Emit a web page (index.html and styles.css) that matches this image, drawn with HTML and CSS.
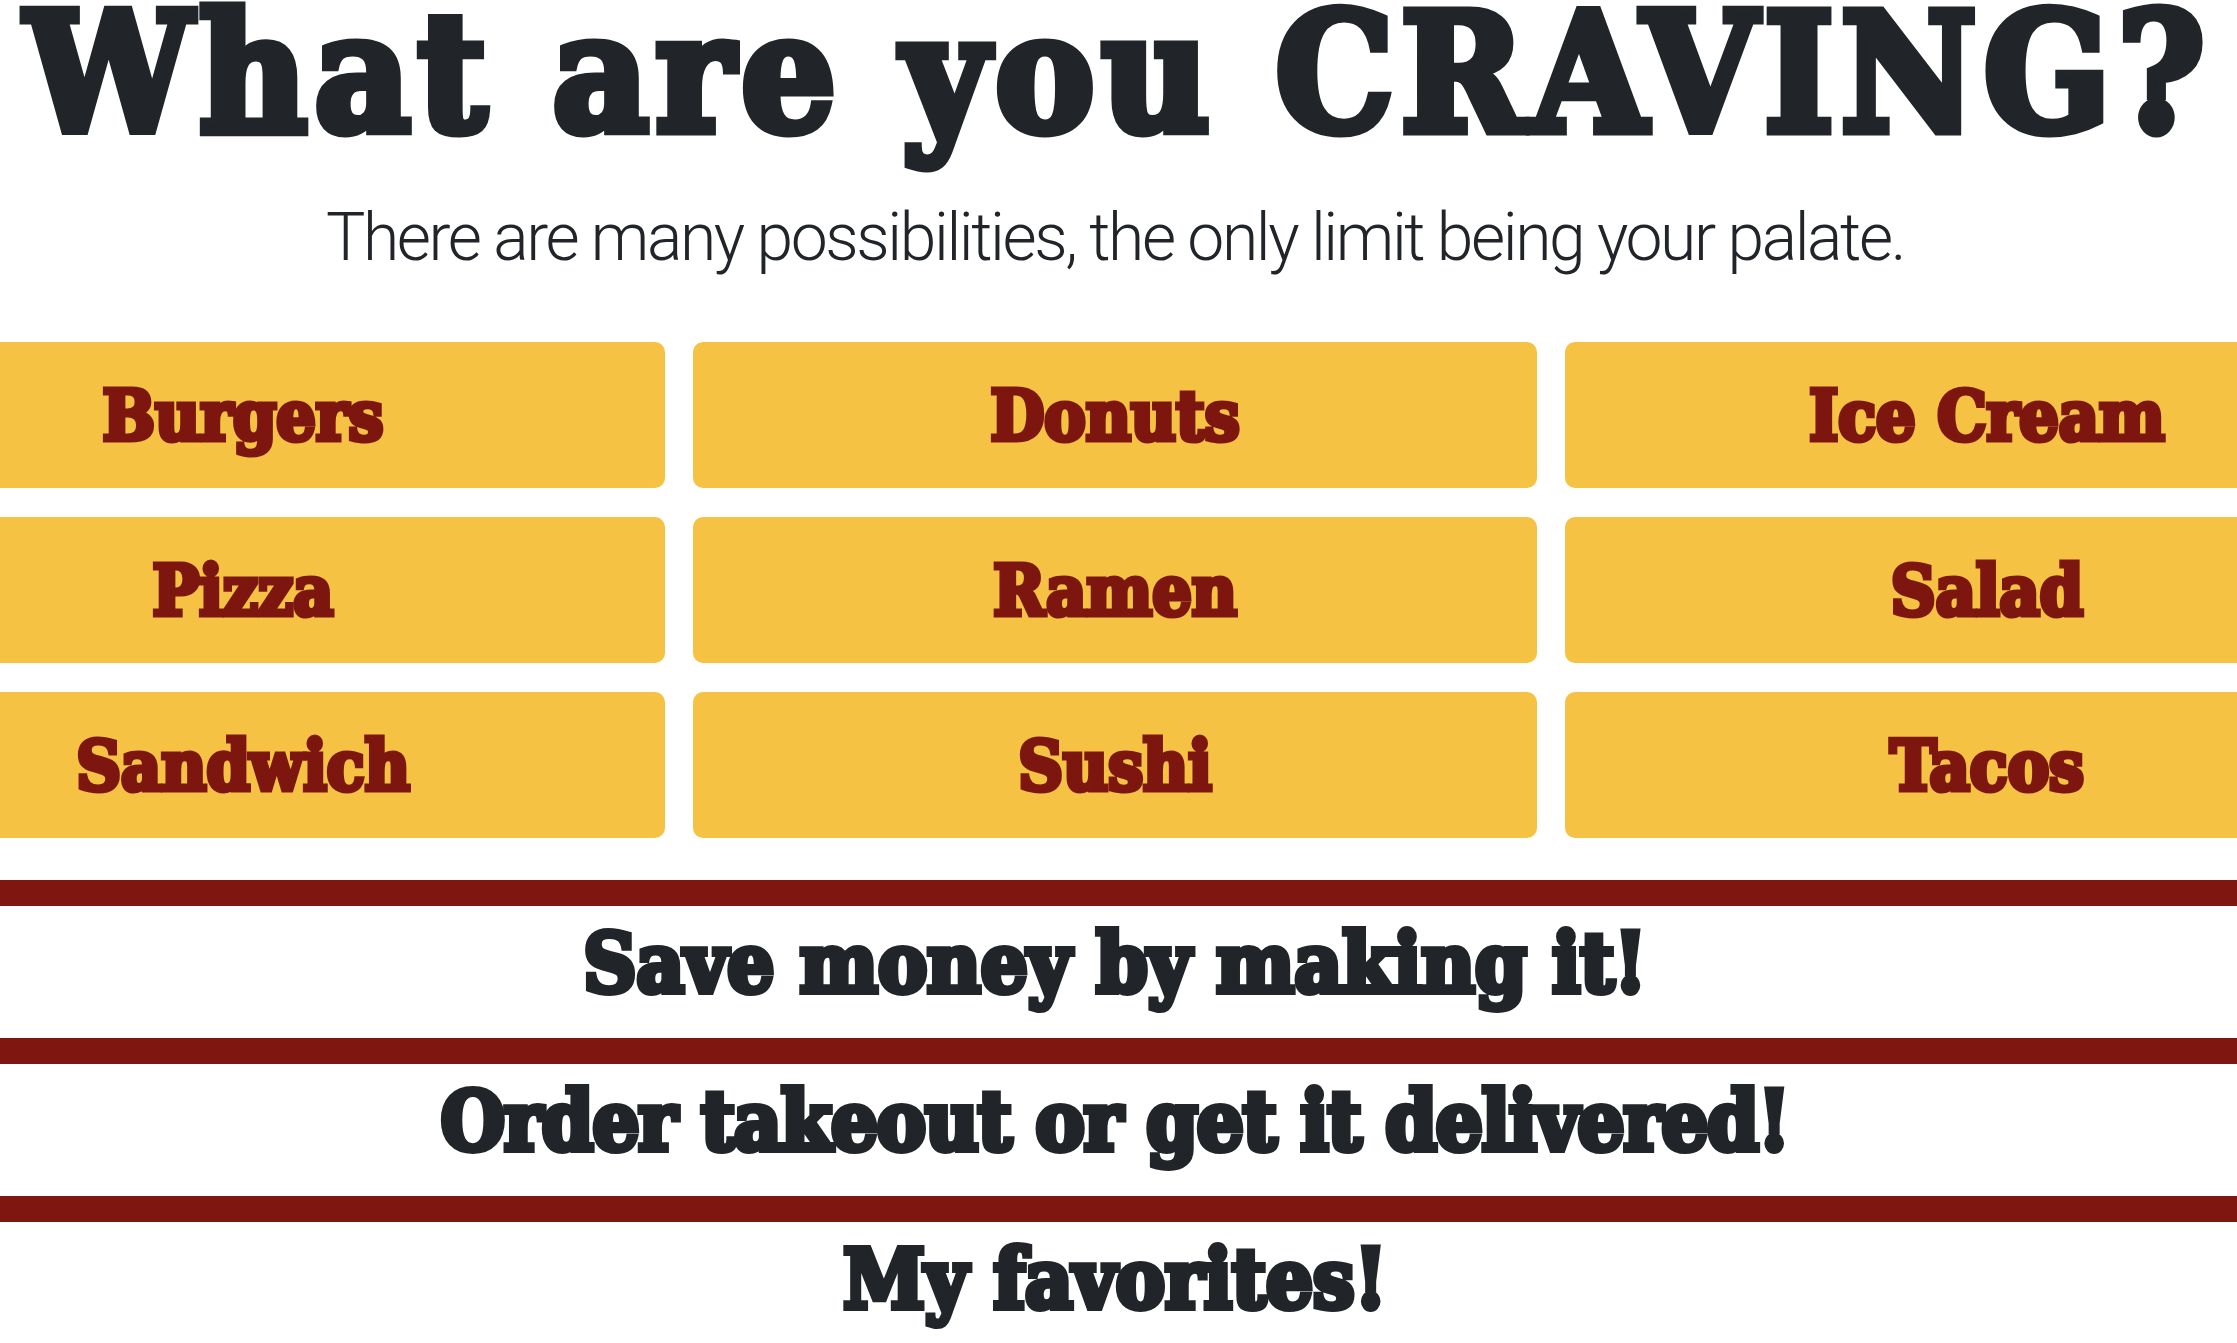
FILE: index.html
```html
<!DOCTYPE html>
<html lang="en">
<head>
<meta charset="utf-8">
<title>What are you CRAVING?</title>
<link rel="stylesheet" href="styles.css">
</head>
<body>
<main class="page">
  <header class="hero">
    <h1 class="title">What are you CRAVING?</h1>
    <p class="lead">There are many possibilities, the only limit being your palate.</p>
  </header>
  <div class="grid">
    <a class="card" href="#">Burgers</a>
    <a class="card" href="#">Donuts</a>
    <a class="card" href="#">Ice Cream</a>
    <a class="card" href="#">Pizza</a>
    <a class="card" href="#">Ramen</a>
    <a class="card" href="#">Salad</a>
    <a class="card" href="#">Sandwich</a>
    <a class="card" href="#">Sushi</a>
    <a class="card" href="#">Tacos</a>
  </div>
  <div class="choices">
    <div class="bar"></div>
    <h2 class="choice-title">Save money by making it!</h2>
    <div class="bar"></div>
    <h2 class="choice-title choice-title--wide">Order takeout or get it delivered!</h2>
    <div class="bar"></div>
    <h2 class="choice-title">My favorites!</h2>
  </div>
</main>
</body>
</html>
```
FILE: styles.css
```css
html, body {
  margin: 0;
  padding: 0;
  background: #ffffff;
}

body {
  color: #212529;
  overflow-x: hidden;
}

.hero {
  padding-right: 7px;
  text-align: center;
}

.title {
  margin: 0;
  font-family: "DejaVu Serif Condensed", "DejaVu Serif", serif;
  font-stretch: condensed;
  font-weight: 700;
  font-size: 165px;
  line-height: 146px;
  letter-spacing: 7.2px;
  text-indent: 7.2px;
  white-space: nowrap;
  -webkit-text-stroke: 9px #212529;
}

.lead {
  margin: 52px 0 0;
  font-family: Roboto, "Liberation Sans", sans-serif;
  font-weight: 300;
  font-size: 66px;
  line-height: 80px;
  letter-spacing: -2.4px;
  white-space: nowrap;
}

.grid {
  margin-top: 64px;
  padding-right: 7px;
  display: grid;
  grid-template-columns: repeat(3, 844px);
  grid-auto-rows: 146px;
  column-gap: 28px;
  row-gap: 29px;
  justify-content: center;
}

.card {
  background: #f5c244;
  border-radius: 10px;
  display: flex;
  align-items: center;
  justify-content: center;
  color: #7d160f;
  text-decoration: none;
  font-family: "DejaVu Serif Condensed", "DejaVu Serif", serif;
  font-stretch: condensed;
  font-weight: 700;
  font-size: 69px;
  white-space: nowrap;
  -webkit-text-stroke: 5px #7d160f;
}

.choices {
  margin-top: 42px;
}

.bar {
  height: 26px;
  background: #7f1710;
}

.choice-title {
  margin: 0;
  height: 132px;
  box-sizing: border-box;
  padding: 0 7px 18px 0;
  line-height: 114px;
  text-align: center;
  font-family: "DejaVu Serif Condensed", "DejaVu Serif", serif;
  font-stretch: condensed;
  font-weight: 700;
  font-size: 82px;
  white-space: nowrap;
  -webkit-text-stroke: 6px #212529;
}

.choice-title--wide {
  letter-spacing: -1px;
}
```
